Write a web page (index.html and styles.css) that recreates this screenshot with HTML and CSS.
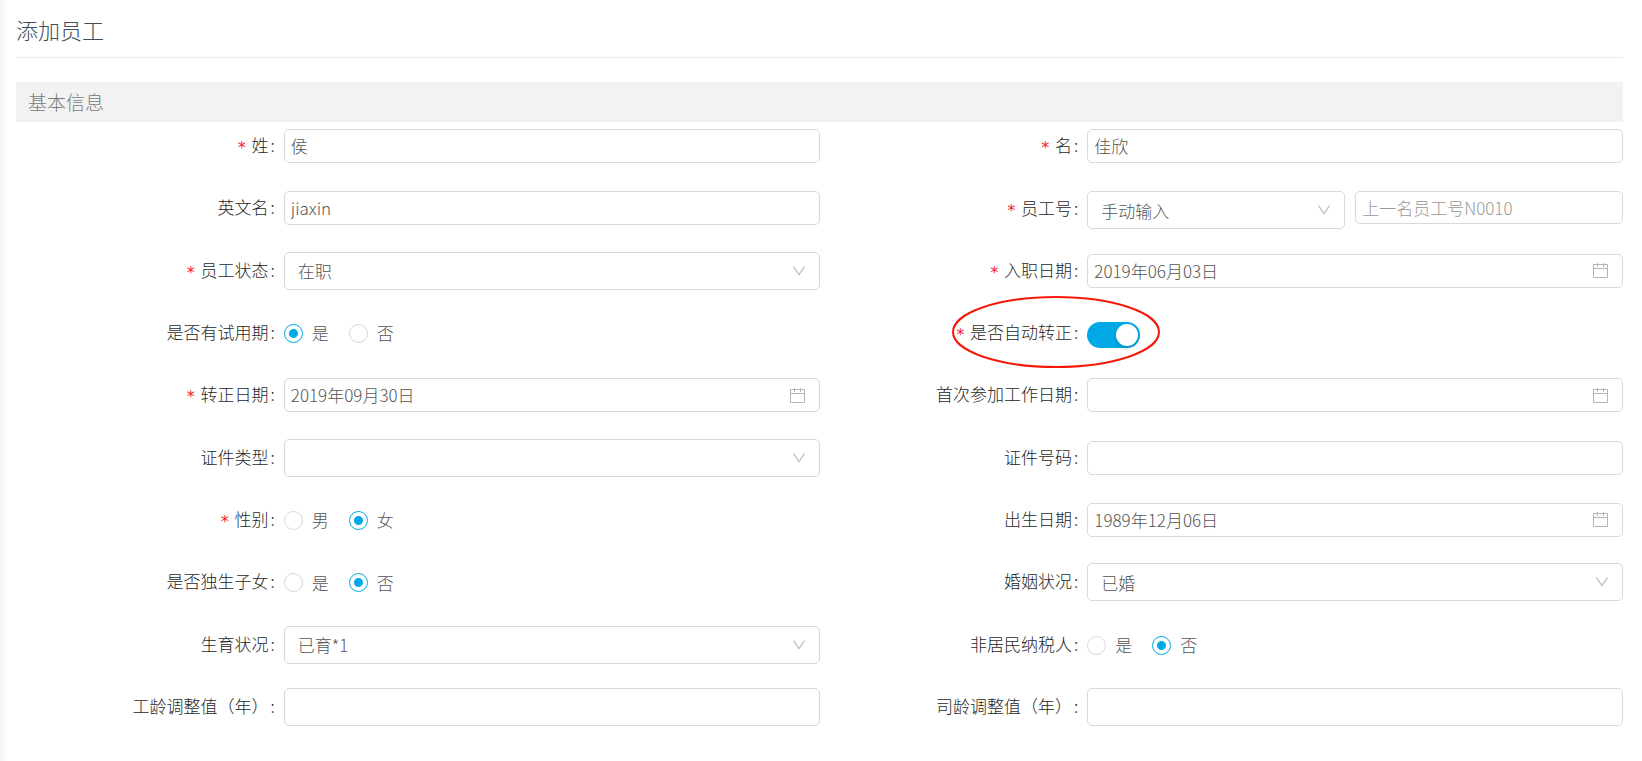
FILE: index.html
```html
<!DOCTYPE html>
<html lang="zh-CN">
<head>
    <meta charset="UTF-8">
    <meta name="viewport" content="width=device-width, initial-scale=1.0">
    <title>添加员工</title>
    <link rel="stylesheet" href="styles.css">
</head>
<body>
    <!-- Shared icons -->
    <svg class="icon-defs" aria-hidden="true">
        <symbol id="icon-down" viewBox="0 0 12 10">
            <path d="M0.5 0.5 L6 8.5 L11.5 0.5" fill="none" stroke="#bfbfbf" stroke-width="1.3"/>
        </symbol>
        <symbol id="icon-calendar" viewBox="0 0 15 15">
            <path d="M0.5 1.5 H14.5 V14.5 H0.5 Z M0.5 5.5 H14.5" fill="none" stroke="#b5b5b5"/>
            <path d="M4.5 0 V4 M10.5 0 V4" fill="none" stroke="#b5b5b5"/>
        </symbol>
    </svg>

    <h1>添加员工</h1>
    <h2>基本信息</h2>

    <form class="employee-form">
        <div class="form-item">
            <label class="form-label" for="lastName"><span class="required">*</span>姓<span class="colon">:</span></label>
            <input class="text-input" type="text" id="lastName" value="侯">
        </div>
        <div class="form-item">
            <label class="form-label" for="firstName"><span class="required">*</span>名<span class="colon">:</span></label>
            <input class="text-input" type="text" id="firstName" value="佳欣">
        </div>

        <div class="form-item">
            <label class="form-label" for="englishName">英文名<span class="colon">:</span></label>
            <input class="text-input" type="text" id="englishName" value="jiaxin">
        </div>
        <div class="form-item">
            <label class="form-label" for="numberMode"><span class="required">*</span>员工号<span class="colon">:</span></label>
            <div class="field-group">
                <div class="select-box">
                    <select id="numberMode"><option>手动输入</option></select>
                    <svg class="icon-down"><use href="#icon-down"/></svg>
                </div>
                <input class="text-input" type="text" aria-label="员工号" placeholder="上一名员工号N0010">
            </div>
        </div>

        <div class="form-item">
            <label class="form-label" for="status"><span class="required">*</span>员工状态<span class="colon">:</span></label>
            <div class="select-box">
                <select id="status"><option>在职</option></select>
                <svg class="icon-down"><use href="#icon-down"/></svg>
            </div>
        </div>
        <div class="form-item">
            <label class="form-label" for="entryDate"><span class="required">*</span>入职日期<span class="colon">:</span></label>
            <div class="date-box">
                <input class="text-input" type="text" id="entryDate" value="2019年06月03日">
                <svg class="icon-calendar"><use href="#icon-calendar"/></svg>
            </div>
        </div>

        <div class="form-item" role="radiogroup" aria-labelledby="probationLabel">
            <span class="form-label" id="probationLabel">是否有试用期<span class="colon">:</span></span>
            <div class="radio-group">
                <label><input type="radio" name="probation" checked>是</label>
                <label><input type="radio" name="probation">否</label>
            </div>
        </div>
        <div class="form-item">
            <label class="form-label" for="autoRegular"><span class="required">*</span>是否自动转正<span class="colon">:</span></label>
            <div class="switch-box">
                <input class="switch" type="checkbox" role="switch" id="autoRegular" checked>
                <!-- Red circle around the switch -->
                <svg class="highlight" viewBox="0 0 208 72"><ellipse cx="104" cy="36" rx="103" ry="35"/></svg>
            </div>
        </div>

        <div class="form-item">
            <label class="form-label" for="regularDate"><span class="required">*</span>转正日期<span class="colon">:</span></label>
            <div class="date-box">
                <input class="text-input" type="text" id="regularDate" value="2019年09月30日">
                <svg class="icon-calendar"><use href="#icon-calendar"/></svg>
            </div>
        </div>
        <div class="form-item">
            <label class="form-label" for="firstWorkDate">首次参加工作日期<span class="colon">:</span></label>
            <div class="date-box">
                <input class="text-input" type="text" id="firstWorkDate">
                <svg class="icon-calendar"><use href="#icon-calendar"/></svg>
            </div>
        </div>

        <div class="form-item">
            <label class="form-label" for="idType">证件类型<span class="colon">:</span></label>
            <div class="select-box">
                <select id="idType"><option></option></select>
                <svg class="icon-down"><use href="#icon-down"/></svg>
            </div>
        </div>
        <div class="form-item">
            <label class="form-label" for="idNumber">证件号码<span class="colon">:</span></label>
            <input class="text-input" type="text" id="idNumber">
        </div>

        <div class="form-item" role="radiogroup" aria-labelledby="genderLabel">
            <span class="form-label" id="genderLabel"><span class="required">*</span>性别<span class="colon">:</span></span>
            <div class="radio-group">
                <label><input type="radio" name="gender">男</label>
                <label><input type="radio" name="gender" checked>女</label>
            </div>
        </div>
        <div class="form-item">
            <label class="form-label" for="birthday">出生日期<span class="colon">:</span></label>
            <div class="date-box">
                <input class="text-input" type="text" id="birthday" value="1989年12月06日">
                <svg class="icon-calendar"><use href="#icon-calendar"/></svg>
            </div>
        </div>

        <div class="form-item" role="radiogroup" aria-labelledby="onlyChildLabel">
            <span class="form-label" id="onlyChildLabel">是否独生子女<span class="colon">:</span></span>
            <div class="radio-group">
                <label><input type="radio" name="onlyChild">是</label>
                <label><input type="radio" name="onlyChild" checked>否</label>
            </div>
        </div>
        <div class="form-item">
            <label class="form-label" for="marriage">婚姻状况<span class="colon">:</span></label>
            <div class="select-box">
                <select id="marriage"><option>已婚</option></select>
                <svg class="icon-down"><use href="#icon-down"/></svg>
            </div>
        </div>

        <div class="form-item">
            <label class="form-label" for="children">生育状况<span class="colon">:</span></label>
            <div class="select-box">
                <select id="children"><option>已育*1</option></select>
                <svg class="icon-down"><use href="#icon-down"/></svg>
            </div>
        </div>
        <div class="form-item" role="radiogroup" aria-labelledby="taxLabel">
            <span class="form-label" id="taxLabel">非居民纳税人<span class="colon">:</span></span>
            <div class="radio-group">
                <label><input type="radio" name="tax">是</label>
                <label><input type="radio" name="tax" checked>否</label>
            </div>
        </div>

        <div class="form-item">
            <label class="form-label" for="workAge">工龄调整值（年）<span class="colon">:</span></label>
            <input class="text-input text-input-tall" type="text" id="workAge">
        </div>
        <div class="form-item">
            <label class="form-label" for="companyAge">司龄调整值（年）<span class="colon">:</span></label>
            <input class="text-input text-input-tall" type="text" id="companyAge">
        </div>
    </form>
</body>
</html>
```
FILE: styles.css
```css
* {
    margin: 0;
    padding: 0;
    box-sizing: border-box;
}

body {
    display: flex;
    flex-direction: column;
    min-height: 100vh;
    padding: 0 19px 35px 16px;
    background: linear-gradient(to right, #f0f5f4, #fff 7px);
    color: #1f1f1f;
    font-family: "Noto Sans CJK SC", sans-serif;
    font-size: 17px;
    font-weight: 300;
}

input,
select {
    font: inherit;
    color: #555;
}

.icon-defs {
    position: absolute;
    width: 0;
    height: 0;
}

h1 {
    height: 58px;
    border-bottom: 1px solid #ebebeb;
    color: #3b4d61;
    font-size: 22px;
    font-weight: 300;
    line-height: 58px;
}

h2 {
    height: 40px;
    margin-top: 24px;
    padding-left: 12px;
    background-color: #f2f2f2;
    color: #7a7a7a;
    font-size: 19px;
    font-weight: 300;
    line-height: 40px;
}

.employee-form {
    flex: 1;
    display: grid;
    grid-template-columns: 1fr 1fr;
    grid-auto-rows: 38px;
    align-content: space-between;
    row-gap: 8px;
    padding-top: 5px;
}

.form-item {
    display: grid;
    grid-template-columns: 1fr 2fr;
    align-items: center;
}

.form-label {
    display: flex;
    justify-content: flex-end;
    align-items: center;
    padding-bottom: 2px;
    line-height: 24px;
    white-space: nowrap;
}

.required {
    margin-right: 5px;
    padding-top: 6px;
    color: #f5222d;
    font-family: "DejaVu Sans Mono", monospace;
    font-size: 16px;
    font-weight: 400;
}

.colon {
    margin: 0 9px 0 2px;
}

.text-input {
    width: 100%;
    height: 34px;
    padding: 0 6px 1px;
    border: 1px solid #d9d9d9;
    border-radius: 5px;
    background-color: #fff;
}

.text-input::placeholder {
    color: #999;
    opacity: 1;
}

.text-input-tall {
    height: 38px;
}

.select-box,
.date-box,
.switch-box {
    position: relative;
    display: flex;
    align-items: center;
}

.select-box select {
    width: 100%;
    height: 38px;
    padding: 0 36px 0 13px;
    border: 1px solid #d9d9d9;
    border-radius: 5px;
    background-color: #fff;
    appearance: none;
}

.icon-down {
    position: absolute;
    right: 15px;
    width: 12px;
    height: 10px;
    pointer-events: none;
}

.icon-calendar {
    position: absolute;
    right: 15px;
    width: 15px;
    height: 15px;
}

/* Employee number: mode + number */
.field-group {
    display: grid;
    grid-template-columns: 1fr 1fr;
    align-items: start;
    align-self: start;
    margin-top: 2px;
}

.field-group .select-box {
    margin-right: 10px;
}

.field-group .text-input {
    height: 33px;
}

.radio-group {
    display: flex;
    gap: 20px;
    padding-top: 1px;
    color: #555;
    line-height: 24px;
}

.radio-group label {
    display: flex;
    align-items: center;
    gap: 9px;
}

.radio-group input {
    width: 19px;
    height: 19px;
    border: 1px solid #d9d9d9;
    border-radius: 50%;
    background-color: #fff;
    appearance: none;
}

.radio-group input:checked {
    border-color: #00a9e6;
    background: radial-gradient(circle, #00a9e6 4px, #fff 5px);
}

.switch-box {
    padding-top: 4px;
}

.switch {
    width: 53px;
    height: 26px;
    padding: 2px;
    border-radius: 13px;
    background-color: #bfbfbf;
    appearance: none;
}

.switch::before {
    content: '';
    display: block;
    width: 22px;
    height: 22px;
    border-radius: 50%;
    background-color: #fff;
    box-shadow: 0 2px 4px rgba(0, 35, 11, 0.2);
}

.switch:checked {
    background-color: #00a9e6;
}

.switch:checked::before {
    margin-left: auto;
}

.highlight {
    position: absolute;
    top: -22px;
    left: -135px;
    width: 208px;
    height: 72px;
    pointer-events: none;
}

.highlight ellipse {
    fill: none;
    stroke: #f5190a;
    stroke-width: 2;
}
```
